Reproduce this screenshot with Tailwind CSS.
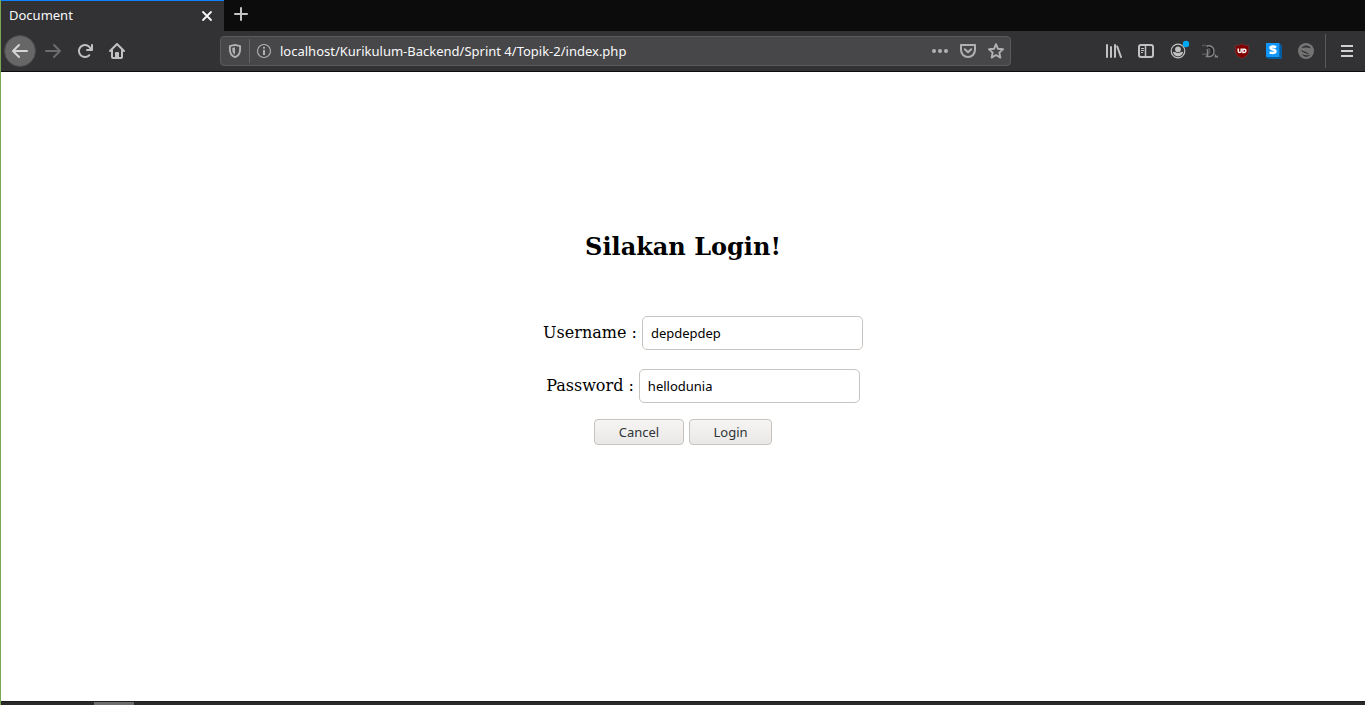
<!DOCTYPE html>
<html lang="id">
<head>
<meta charset="utf-8">
<title>Document</title>
<script src="https://cdn.jsdelivr.net/npm/@tailwindcss/browser@4"></script>
</head>
<body class="flex min-h-screen flex-col border-l border-[#7aa952] bg-white font-['Noto_Sans',sans-serif] text-[13px] text-black">
  <header class="border-b border-[#0c0c0d] bg-[#323234] text-[#f9f9fa]">
    <div class="flex h-[31px] bg-[#0c0c0d]">
      <div class="flex w-[223px] items-center justify-between border-t border-[#0a84ff] bg-[#323234] pr-[9px] pb-px pl-2">
        <span>Document</span>
        <button type="button" aria-label="Close tab" class="grid size-4 place-items-center">
          <svg class="size-4" viewBox="0 0 16 16" fill="none" stroke="#f9f9fa" stroke-width="1.8" stroke-linecap="round"><path d="M4 4l8 8M12 4l-8 8"/></svg>
        </button>
      </div>
      <button type="button" aria-label="New tab" class="grid w-[34px] place-items-center pb-1">
        <svg class="size-4" viewBox="0 0 16 16" fill="none" stroke="#c4c4c5" stroke-width="2" stroke-linecap="round"><path d="M8 2v12M2 8h12"/></svg>
      </button>
    </div>
    <div class="flex h-10 items-center pl-[3px]">
      <nav class="flex gap-px text-[#c1c1c2]">
        <button type="button" aria-label="Back" class="grid size-8 place-items-center rounded-full border border-[#4a4a4b] bg-[#676768] text-[#d5d5d5]">
          <svg class="size-4" viewBox="0 0 16 16" fill="currentColor"><path d="M15 7H3.414l4.293-4.293a1 1 0 0 0-1.414-1.414l-6 6a1 1 0 0 0 0 1.414l6 6a1 1 0 0 0 1.414-1.414L3.414 9H15a1 1 0 0 0 0-2z"/></svg>
        </button>
        <div class="flex">
          <button type="button" aria-label="Forward" class="grid size-8 place-items-center text-[#6c6c6d]">
            <svg class="size-4" viewBox="0 0 16 16" fill="currentColor"><path d="M1 7h11.586L8.293 2.707a1 1 0 0 1 1.414-1.414l6 6a1 1 0 0 1 0 1.414l-6 6a1 1 0 0 1-1.414-1.414L12.586 9H1a1 1 0 0 1 0-2z"/></svg>
          </button>
          <button type="button" aria-label="Reload" class="grid size-8 place-items-center">
            <svg class="size-4" viewBox="0 0 16 16" fill="currentColor"><path d="M15 1a1 1 0 0 0-1 1v2.418A6.995 6.995 0 1 0 8 15a6.954 6.954 0 0 0 4.950-2.050 1 1 0 0 0-1.414-1.414A5.019 5.019 0 1 1 12.549 6H10a1 1 0 0 0 0 2h5a1 1 0 0 0 1-1V2a1 1 0 0 0-1-1z"/></svg>
          </button>
          <button type="button" aria-label="Home" class="grid size-8 place-items-center">
            <svg class="size-4" viewBox="0 0 16 16" fill="currentColor"><path fill-rule="evenodd" d="M15.707 7.293l-7-7a1 1 0 0 0-1.414 0l-7 7a1 1 0 0 0 1.414 1.414L2 8.414V14a2 2 0 0 0 2 2h8a2 2 0 0 0 2-2V8.414l.293.293a1 1 0 0 0 1.414-1.414zM12 14h-2v-4a1 1 0 0 0-1-1H7a1 1 0 0 0-1 1v4H4V6.414l4-4 4 4z"/><path d="M8 11h1v2H8z"/></svg>
          </button>
        </div>
      </nav>
      <div class="mx-[87px] flex h-[30px] min-w-0 flex-1 items-center rounded-sm border border-[#5b5b5e] bg-[#474749] text-[#b1b1b3]">
        <button type="button" aria-label="Tracking protection" class="grid w-7 place-items-center">
          <svg class="size-4" viewBox="0 0 16 16"><path fill="none" stroke="currentColor" stroke-width="1.900" stroke-linejoin="round" d="M8 1.900L13.100 3.200V6.500C13.100 10.300 11.200 13 8 14.200C4.800 13 2.900 10.300 2.900 6.500V3.200Z"/><path fill="currentColor" d="M8 4.300V11.800C6.200 10.700 5.300 9 5.300 6.500V5Z"/></svg>
        </button>
        <span class="h-6 w-px bg-[#626467]"></span>
        <button type="button" aria-label="Site information" class="grid w-7 place-items-center">
          <svg class="size-4" viewBox="0 0 16 16"><circle cx="8" cy="8" r="6.500" fill="none" stroke="currentColor" stroke-width="1.100"/><path fill="currentColor" d="M7 7h2v5H7z"/><circle cx="8" cy="4.800" r="1.100" fill="currentColor"/></svg>
        </button>
        <input type="text" aria-label="Address" value="localhost/Kurikulum-Backend/Sprint 4/Topik-2/index.php" class="h-full min-w-0 flex-1 bg-transparent pl-0.5 text-[#f9f9fa] outline-none">
        <button type="button" aria-label="Page actions" class="grid w-7 place-items-center">
          <svg class="size-4" viewBox="0 0 16 16" fill="currentColor"><circle cx="2" cy="8" r="2"/><circle cx="8" cy="8" r="2"/><circle cx="14" cy="8" r="2"/></svg>
        </button>
        <button type="button" aria-label="Save to Pocket" class="grid w-7 place-items-center">
          <svg class="size-4" viewBox="0 0 16 16" fill="none" stroke="currentColor" stroke-width="2" stroke-linejoin="round" stroke-linecap="round"><path d="M1 2h14v5a7 7 0 0 1-14 0z"/><path d="M4.800 6.200L8 9.300l3.200-3.100"/></svg>
        </button>
        <button type="button" aria-label="Bookmark" class="grid w-7 place-items-center">
          <svg class="size-4" viewBox="0 0 16 16" fill="none" stroke="currentColor" stroke-width="1.900" stroke-linejoin="round"><path d="M8 1.200l2 4.600 5 .5-3.700 3.300 1.100 5L8 12l-4.400 2.600 1.100-5L1 6.300l5-.5z"/></svg>
        </button>
      </div>
      <div class="flex text-[#c1c1c2]">
        <button type="button" aria-label="Library" class="grid size-8 place-items-center">
          <svg class="size-4" viewBox="0 0 16 16" fill="none" stroke="currentColor" stroke-width="2" stroke-linecap="round"><path d="M1 2v12M5 4v10M9 2v12M11.200 3.500l3.800 10.500"/></svg>
        </button>
        <button type="button" aria-label="Sidebars" class="grid size-8 place-items-center">
          <svg class="size-4" viewBox="0 0 16 16" fill="none" stroke="currentColor"><rect x="1" y="2" width="14" height="12" rx="2" stroke-width="2"/><path stroke-width="1.500" d="M7.500 2v12"/><path d="M3 5.500h3M3 7.500h3M3 9.500h2"/></svg>
        </button>
        <button type="button" aria-label="Account" class="grid size-8 place-items-center">
          <svg class="size-6" viewBox="0 0 24 24"><circle cx="12" cy="12" r="6.800" fill="none" stroke="currentColor" stroke-width="1.200"/><circle cx="12" cy="10.300" r="2.900" fill="currentColor"/><path fill="currentColor" d="M7 13C8.500 12.400 9.500 14 12 14s3.500-1.600 5-1C16.800 15.700 14.500 17.400 12 17.400S7.200 15.700 7 13z"/><circle cx="20" cy="5" r="3.200" fill="#00a8f3"/></svg>
        </button>
        <button type="button" aria-label="Downloader" class="grid size-8 place-items-center">
          <svg class="size-4" viewBox="0 0 16 16" fill="none"><path stroke="#565657" stroke-width="1.500" d="M0 2.500h3.500q4 1 4 5t-4 3.800H0"/><path stroke="#1d1d1e" stroke-width="2" d="M6 4h2q3 1 3 5t-4 4"/><path stroke="#858586" stroke-width="1.400" d="M5 2.800h2.500q4.500 1 4.500 5.700t-4.500 5H4.500l1-1.500V6"/><path stroke="#858586" stroke-width="1.400" d="M13.500 11.500v2.300H16V12.500"/></svg>
        </button>
        <button type="button" aria-label="uBlock Origin" class="grid size-8 place-items-center">
          <svg class="size-4" viewBox="0 0 16 16"><path fill="#800000" stroke="#643c40" stroke-width=".8" d="M8 .6C10 2.200 12 2.500 14.800 2.600V7.500C14.800 11.500 12.500 13.500 8 15.600 3.500 13.500 1.200 11.500 1.200 7.500V2.600C4 2.500 6 2.200 8 .6z"/><g fill="none" stroke="#fff" stroke-width="1.400"><path d="M4.200 5.500v2.700q0 1.300 1.500 1.300t1.500-1.300V5.500"/><path d="M8.900 9.500V6.200h1.300q1.800 0 1.800 1.600t-1.800 1.700z"/></g></svg>
        </button>
        <button type="button" aria-label="Stylus" class="grid size-8 place-items-center">
          <svg class="size-4" viewBox="0 0 16 16"><path fill="#005b9c" d="M0 14h13.500V0L16 2.500V16H2z"/><path fill="#1196fb" d="M0 0h13.500v14H0z"/><path fill="none" stroke="#fff" stroke-width="2.500" d="M10.200 4.200Q8.500 3.500 6.500 3.600 4.300 3.800 4.500 5.200c.2 1.800 5 .8 5 3.100 0 1.800-3.200 2-5.900 1"/></svg>
        </button>
        <button type="button" aria-label="Blocked extension" class="grid size-8 place-items-center text-[#747475]">
          <svg class="size-4" viewBox="0 0 16 16"><circle cx="8" cy="8" r="8" fill="currentColor"/><path fill="#323234" d="M3.500 5.200C4.500 3.200 6 2.400 8 2.400c2.200 0 4 1 5 3.200C10 4.400 6.500 4.300 3.500 5.200zM2.400 7.200C5.500 7.500 9.500 9.300 11.800 11.300 8.500 10.600 5 9.500 2.400 7.200zM4 11.300c2.500 1.200 5.500 1.300 8.200.4C11 13.100 9.700 13.700 8 13.700c-1.700 0-3-.8-4-2.400z"/></svg>
        </button>
      </div>
      <span class="mx-[3px] h-[34px] w-px bg-[#59595b]"></span>
      <button type="button" aria-label="Menu" class="mx-[2px] grid size-8 place-items-center">
        <svg class="size-4" viewBox="0 0 16 16" fill="none" stroke="#d0d0d1" stroke-width="2"><path d="M2 3h12M2 8h12M2 13h12"/></svg>
      </button>
    </div>
  </header>
  <main class="flex-1 pt-40 font-['DejaVu_Serif',serif] text-base">
    <h1 class="text-center text-2xl leading-[30px] font-bold">Silakan Login!</h1>
    <form class="mt-[54px] flex flex-col items-center">
      <div class="flex items-center gap-[5px] pl-10">
        <label for="username">Username :</label>
        <input id="username" type="text" value="depdepdep" class="h-[34px] w-[221px] rounded-[5px] border border-[#c8c3be] bg-white px-2 font-['Noto_Sans',sans-serif] text-[13px]">
      </div>
      <div class="mt-[19px] flex items-center gap-[5px] pl-10">
        <label for="password">Password :</label>
        <input id="password" type="text" value="hellodunia" class="h-[34px] w-[221px] rounded-[5px] border border-[#c8c3be] bg-white px-2 font-['Noto_Sans',sans-serif] text-[13px]">
      </div>
      <div class="mt-4 flex gap-[5px] font-['Noto_Sans',sans-serif] text-[13px] text-[#2e3436]">
        <button type="reset" class="h-[26px] w-[90px] rounded-[4px] border border-[#c8c3be] bg-linear-to-b from-[#f6f5f4] to-[#e9e8e7] pt-px">Cancel</button>
        <button type="submit" class="h-[26px] w-[83px] rounded-[4px] border border-[#c8c3be] bg-linear-to-b from-[#f6f5f4] to-[#e9e8e7] pt-px">Login</button>
      </div>
    </form>
  </main>
  <footer class="h-1 border-t border-[#1d1b1c] bg-[#2b292a] pl-[93px]">
    <div class="h-[3px] w-10 bg-[#6f6e6f]"></div>
  </footer>
</body>
</html>
